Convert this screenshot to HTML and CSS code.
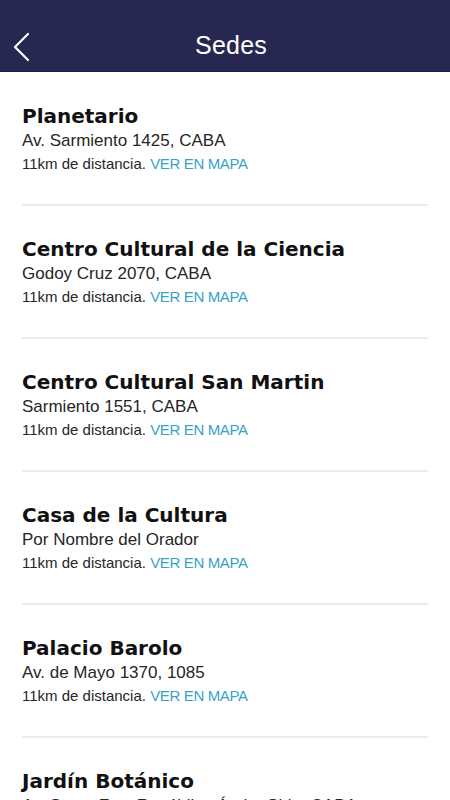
FILE: index.html
```html
<!DOCTYPE html>
<html lang="es">
<head>
<meta charset="utf-8">
<title>Sedes</title>
<link rel="stylesheet" href="styles.css">
</head>
<body>
<header class="topbar">
  <div class="back">
    <svg width="20" height="30" viewBox="0 0 20 30"><polyline points="15,2 2,15 15,28" fill="none" stroke="#fff" stroke-width="2.2" stroke-linecap="round" stroke-linejoin="round"/></svg>
  </div>
  <h1 class="title">Sedes</h1>
  <div class="spacer"></div>
</header>
<main class="list">
  <section class="item">
    <h2 class="name">Planetario</h2>
    <p class="addr">Av. Sarmiento 1425, CABA</p>
    <p class="dist">11km de distancia. <a class="map">VER EN MAPA</a></p>
  </section>
  <section class="item">
    <h2 class="name">Centro Cultural de la Ciencia</h2>
    <p class="addr">Godoy Cruz 2070, CABA</p>
    <p class="dist">11km de distancia. <a class="map">VER EN MAPA</a></p>
  </section>
  <section class="item">
    <h2 class="name">Centro Cultural San Martin</h2>
    <p class="addr">Sarmiento 1551, CABA</p>
    <p class="dist">11km de distancia. <a class="map">VER EN MAPA</a></p>
  </section>
  <section class="item">
    <h2 class="name">Casa de la Cultura</h2>
    <p class="addr">Por Nombre del Orador</p>
    <p class="dist">11km de distancia. <a class="map">VER EN MAPA</a></p>
  </section>
  <section class="item">
    <h2 class="name">Palacio Barolo</h2>
    <p class="addr">Av. de Mayo 1370, 1085</p>
    <p class="dist">11km de distancia. <a class="map">VER EN MAPA</a></p>
  </section>
  <section class="item">
    <h2 class="name">Jardín Botánico</h2>
    <p class="addr">Av. Santa Fe y República Árabe Siria, CABA</p>
    <p class="dist">11km de distancia. <a class="map">VER EN MAPA</a></p>
  </section>
</main>
</body>
</html>
```
FILE: styles.css
```css
* { box-sizing: border-box; }
html, body { margin: 0; padding: 0; background: #fff; }
body { font-family: "Liberation Sans", Arial, sans-serif; width: 450px; height: 800px; overflow: hidden; }

.topbar {
  height: 72px;
  padding-top: 20px;
  background: #262851;
  border-bottom: 1px solid #1b1d3c;
  display: grid;
  grid-template-columns: 1fr auto 1fr;
  align-items: center;
}
.back { padding-left: 13px; padding-top: 2px; display: flex; align-items: center; }
.title {
  margin: 0;
  padding: 0 0 0 12px;
  color: #fff;
  font-weight: 400;
  font-size: 25px;
  letter-spacing: 0.2px;
}

.list { padding-top: 1px; }
.item {
  margin: 0 22px;
  padding: 30px 0 29px;
  border-bottom: 2px solid #ececec;
}
.name {
  margin: 0;
  font-family: "DejaVu Sans", sans-serif;
  font-weight: 700;
  font-size: 20px;
  line-height: 26px;
  color: #111;
}
.addr {
  margin: 0;
  font-size: 17px;
  line-height: 24px;
  color: #262626;
}
.dist {
  margin: 0;
  font-size: 15px;
  line-height: 22px;
  color: #262626;
}
.map { color: #37a3c4; letter-spacing: -0.35px; }
```
